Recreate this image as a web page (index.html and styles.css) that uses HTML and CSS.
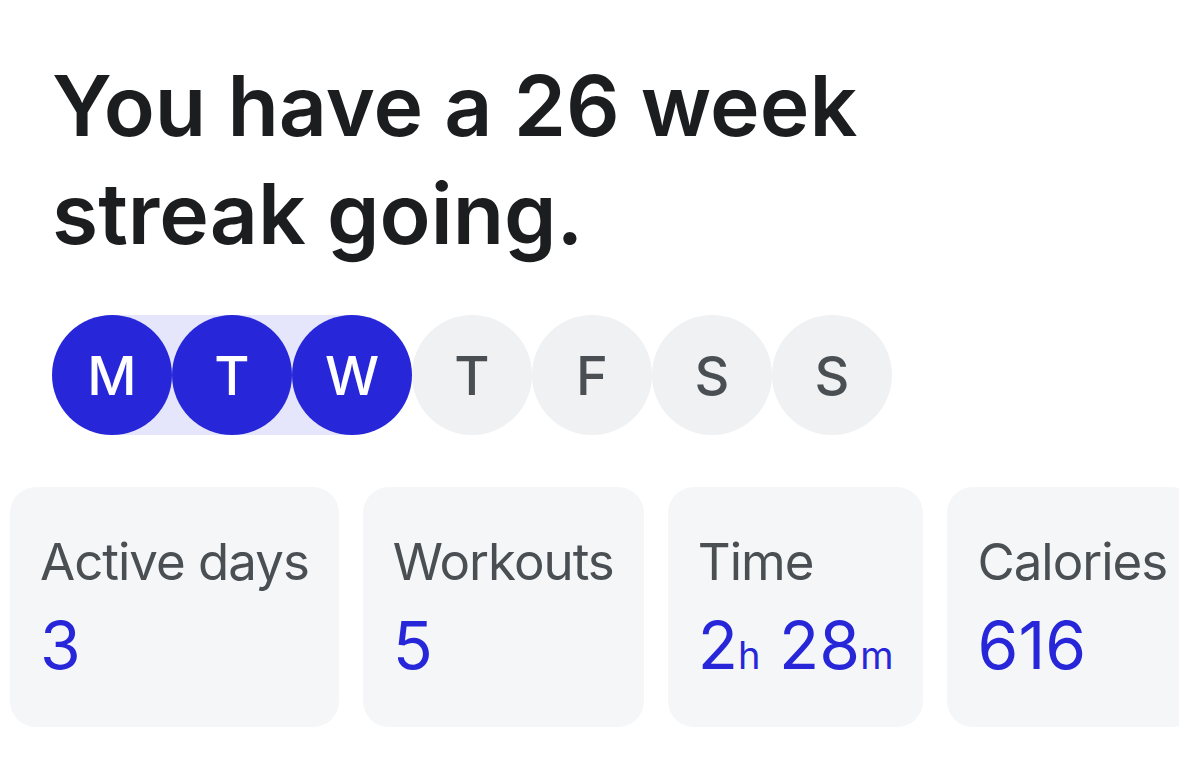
FILE: index.html
```html
<!DOCTYPE html>
<html>
<head>
<meta charset="utf-8">
<link rel="stylesheet" href="styles.css">
</head>
<body>
<main class="page">
  <h1 class="title">You have a 26 week<br>streak going.</h1>
  <div class="days">
    <span class="day on">M</span>
    <span class="day on">T</span>
    <span class="day on">W</span>
    <span class="day">T</span>
    <span class="day">F</span>
    <span class="day">S</span>
    <span class="day">S</span>
  </div>
  <div class="cards">
    <div class="card">
      <div class="label">Active days</div>
      <div class="value">3</div>
    </div>
    <div class="card">
      <div class="label">Workouts</div>
      <div class="value">5</div>
    </div>
    <div class="card">
      <div class="label">Time</div>
      <div class="value">2<span class="unit">h</span> 28<span class="unit">m</span></div>
    </div>
    <div class="card">
      <div class="label">Calories</div>
      <div class="value">616</div>
    </div>
  </div>
</main>
</body>
</html>
```

FILE: styles.css
```css
html, body {
  margin: 0;
  padding: 0;
  background: #ffffff;
}
body {
  font-family: Inter, "Noto Sans", "Liberation Sans", sans-serif;
  overflow: hidden;
}
.page {
  display: flex;
  flex-direction: column;
  padding-top: 52px;
}
.title {
  margin: 0 0 47px 52px;
  font-size: 84px;
  line-height: 108px;
  font-weight: 600;
  color: #1c1d1f;
  letter-spacing: 0;
}
.days {
  display: flex;
  width: fit-content;
  margin-left: 52px;
  background: linear-gradient(to right, transparent 60px, #e5e5fb 60px, #e5e5fb 300px, transparent 300px);
}
.day {
  width: 120px;
  height: 120px;
  border-radius: 50%;
  background: #f0f1f3;
  color: #4a4f53;
  display: flex;
  align-items: center;
  justify-content: center;
  font-size: 54px;
  font-weight: 500;
}
.day.on {
  background: #2727d9;
  color: #ffffff;
}
.cards {
  display: flex;
  gap: 24px;
  margin-top: 52px;
  padding-left: 10px;
}
.card {
  flex: none;
  background: #f5f6f8;
  border-radius: 26px;
  height: 240px;
  box-sizing: border-box;
  padding: 42px 30px 0 30px;
  display: flex;
  flex-direction: column;
  gap: 8px;
}
.label {
  font-size: 51px;
  line-height: 66px;
  letter-spacing: -1px;
  color: #4a4f53;
  white-space: nowrap;
}
.value {
  font-size: 66px;
  line-height: 84px;
  color: #2727d9;
  white-space: nowrap;
}
.unit {
  font-size: 38px;
}
```
